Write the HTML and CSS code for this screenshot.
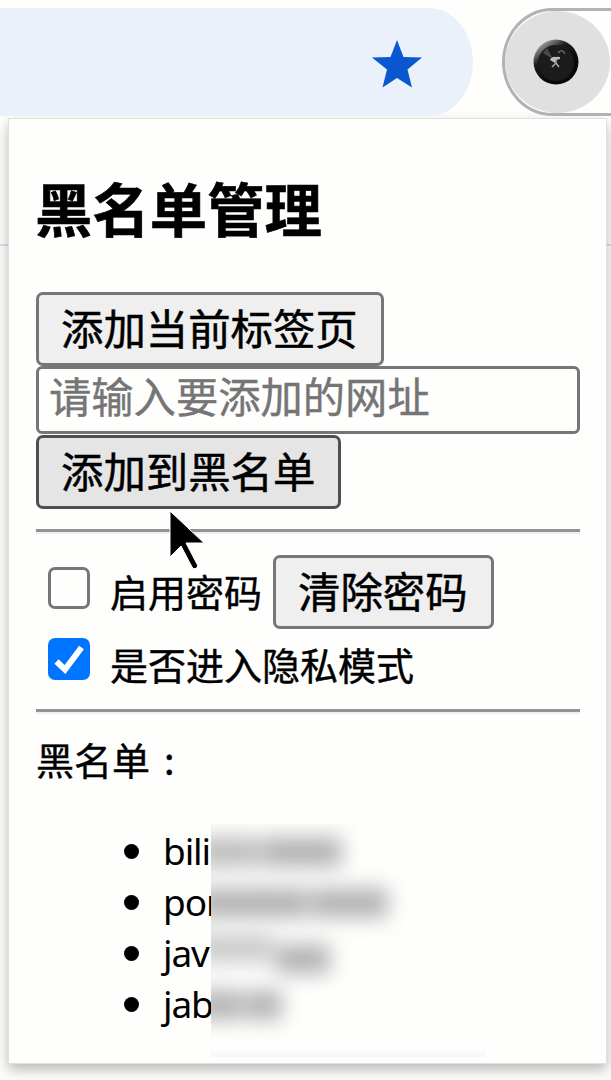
FILE: index.html
```html
<!DOCTYPE html>
<html lang="zh-CN">
<head>
  <meta charset="UTF-8">
  <meta name="viewport" content="width=device-width, initial-scale=1.0">
  <title>黑名单管理</title>
  <link rel="stylesheet" href="styles.css">
</head>
<body>
  <header class="toolbar">
    <div class="address-bar">
      <svg class="star" viewBox="0 0 50 48"><path d="M25 0 31.5 17 50 17.5 35.500 29.500 40 47.500 25 38 10.500 47.500 15 29.500 0 17.500 18.500 17Z" fill="#0b57d0"/></svg>
    </div>
    <div class="extensions">
      <div class="extension">
        <svg class="extension-icon" viewBox="0 0 46 46">
          <defs>
            <linearGradient id="rim" x1="0.1" y1="0" x2="0.6" y2="0.7">
              <stop offset="0" stop-color="#ccc"/>
              <stop offset="0.25" stop-color="#777"/>
              <stop offset="0.5" stop-color="#1c1c1c"/>
              <stop offset="1" stop-color="#080808"/>
            </linearGradient>
          </defs>
          <circle cx="23" cy="23" r="22.500" fill="url(#rim)"/>
          <circle cx="23" cy="24" r="18" fill="#1b1b1b"/>
          <path d="M10 14 20 20 14 9Z" fill="#484848"/>
          <path d="M25 14q4-5 7 1" fill="none" stroke="#666" stroke-width="1.500"/>
          <path d="M17 21q2-4 6-3 5-1 4 2l-4 1-1 3Z" fill="#bbb"/>
          <path d="M23 21v3l-4 4M23 24l3 4" fill="none" stroke="#aaa" stroke-width="1.500"/>
        </svg>
      </div>
    </div>
  </header>

  <main class="popup">
    <h2>黑名单管理</h2>
    <button class="button">添加当前标签页</button>
    <input class="url-input" type="text" placeholder="请输入要添加的网址">
    <button class="button hovered">添加到黑名单</button>
    <hr>
    <div class="option">
      <span class="checkbox"></span>
      <label>启用密码</label>
      <button class="button">清除密码</button>
    </div>
    <div class="option private">
      <span class="checkbox checked">
        <svg viewBox="0 0 42 42"><path d="M8.500 23.500 17 31.500 33.500 9.500" fill="none" stroke="#fff" stroke-width="6"/></svg>
      </span>
      <label>是否进入隐私模式</label>
    </div>
    <hr>
    <p class="list-title">黑名单<span class="colon">:</span></p>
    <div class="blacklist">
      <ul>
        <li>bili</li>
        <li>por</li>
        <li>jav</li>
        <li>jab</li>
      </ul>
      <div class="redacted">
        <div class="smudge"><i class="a1"></i><i class="a2"></i></div>
        <div class="smudge"><i class="b1"></i><i class="b2"></i></div>
        <div class="smudge"><i class="c1"></i><i class="c2"></i></div>
        <div class="smudge"><i class="d1"></i><i class="d2"></i></div>
      </div>
    </div>
  </main>

  <svg class="cursor" viewBox="0 0 38 62"><path d="M2 2V48L13 37 24 58q3 4 6-1L18 34H36Z" fill="#000" stroke="#fff" stroke-width="1"/></svg>
</body>
</html>
```
FILE: styles.css
```css
* {
  box-sizing: border-box;
}

body {
  margin: 0;
  height: 1080px;
  overflow: hidden;
  color: #000;
  background: linear-gradient(#fefefd 244px, #dfe2e2 244px, #dfe2e2 246px, #fefefd 246px);
  font-family: "Noto Sans", "Noto Sans CJK SC", sans-serif;
  font-size: 38px;
}

.toolbar {
  display: flex;
  gap: 29px;
  padding-top: 8px;
  height: 118px;
}

.address-bar {
  display: flex;
  justify-content: flex-end;
  flex: none;
  width: 473px;
  height: 108px;
  padding: 32px 51px 0 0;
  background: #ebf1fb;
  border-radius: 0 44px 44px 0 / 0 54px 54px 0;
}

.star {
  width: 50px;
  height: 48px;
}

.extensions {
  flex: 1;
  height: 108px;
  border: 3px solid #b2b2b2;
  border-right: none;
  border-radius: 50px 0 0 50px / 54px 0 0 54px;
  overflow: hidden;
}

.extension {
  display: flex;
  align-items: center;
  justify-content: center;
  width: 105px;
  height: 102px;
  background: #e0e0e0;
  border-radius: 50%;
}

.extension-icon {
  width: 46px;
  height: 46px;
  margin-right: 3px;
}

.popup {
  width: 599px;
  height: 946px;
  margin-left: 8px;
  padding: 47px 26px 0 27px;
  background: #fefefd;
  border: 1px solid #dfe1e1;
  box-shadow: 0 6px 12px rgba(0, 0, 0, 0.27);
}

h2 {
  margin: 0 0 43px -1px;
  font-family: "Noto Sans CJK SC", sans-serif;
  font-size: 57.4px;
  line-height: 83px;
  -webkit-text-stroke: 0.6px #000;
}

.button {
  display: block;
  height: 74px;
  padding: 0 23px 5px 22px;
  color: #000;
  background: #efefef;
  border: 3px solid #767676;
  border-radius: 7px;
  font-family: "Noto Sans CJK SC", sans-serif;
  font-size: 42.4px;
  line-height: 62px;
  white-space: nowrap;
  -webkit-text-stroke: 0.5px #000;
}

.button.hovered {
  margin-top: 1px;
  background: #e5e5e5;
  border-color: #4f4f4f;
}

.url-input {
  display: block;
  width: 544px;
  height: 68px;
  padding: 0 10px 11px;
  color: #000;
  background: #fefefd;
  border: 3px solid #767676;
  border-radius: 6px;
  font-family: "Noto Sans CJK SC", sans-serif;
  font-size: 42.3px;
}

.url-input::placeholder {
  color: #757575;
  -webkit-text-stroke: 0.4px #757575;
}

hr {
  height: 5px;
  margin: 20px 0 21px;
  border: solid;
  border-width: 3px 0 2px;
  border-color: #929292 #eee #eee;
}

.option {
  display: flex;
  height: 74px;
  padding-left: 12px;
}

.option label {
  margin: 8px 11px 0 20px;
  font-family: "Noto Sans CJK SC", sans-serif;
  line-height: 56px;
  -webkit-text-stroke: 0.4px #000;
}

.checkbox {
  flex: none;
  width: 42px;
  height: 42px;
  margin-top: 12px;
  border: 3px solid #767676;
  border-radius: 7px;
}

.private {
  height: 80px;
}

.private label {
  margin-top: 7px;
}

.private .checkbox {
  margin-top: 9px;
}

.checkbox.checked {
  background: #0075ff;
  border: none;
}

.checkbox svg {
  display: block;
}

.private + hr {
  margin: 0;
}

.list-title {
  margin: 17px 0 0;
  font-family: "Noto Sans CJK SC", sans-serif;
  line-height: 56px;
  -webkit-text-stroke: 0.4px #000;
}

.colon {
  margin-left: 14px;
}

.blacklist {
  display: flex;
  height: 233px;
  margin-top: 37px;
}

ul {
  flex: none;
  width: 175px;
  margin: 0;
  padding: 1px 0 0 88px;
  list-style: none;
  overflow: hidden;
}

li {
  display: flex;
  align-items: center;
  gap: 24px;
  height: 51px;
  font-size: 37px;
  letter-spacing: -1.1px;
}

li::before {
  content: "";
  flex: none;
  width: 15px;
  height: 15px;
  margin-top: 1px;
  border-radius: 50%;
  background: #000;
}

.redacted {
  width: 274px;
  padding-top: 2px;
  background: linear-gradient(transparent 224px, #f7f5f7);
  overflow: hidden;
}

.smudge {
  display: flex;
  align-items: center;
  height: 51px;
  filter: blur(10px);
}

.smudge i {
  height: 30px;
  background: #b4b4b4;
}

.smudge .a1 {
  width: 62px;
  margin: 0 3px 0 -14px;
  background: #bebebe;
}

.a2 {
  width: 80px;
}

.b1 {
  width: 111px;
  margin: 0 3px 0 -14px;
}

.b2 {
  width: 77px;
}

.smudge .c1 {
  width: 76px;
  margin: -12px 3px 0 -14px;
  background: #ccc;
}

.smudge .c2 {
  width: 54px;
  margin-top: 10px;
}

.d1 {
  width: 46px;
  margin: 0 3px 0 -14px;
}

.d2 {
  width: 36px;
}

.cursor {
  position: absolute;
  left: 168px;
  top: 509px;
  width: 38px;
  height: 62px;
}
```
